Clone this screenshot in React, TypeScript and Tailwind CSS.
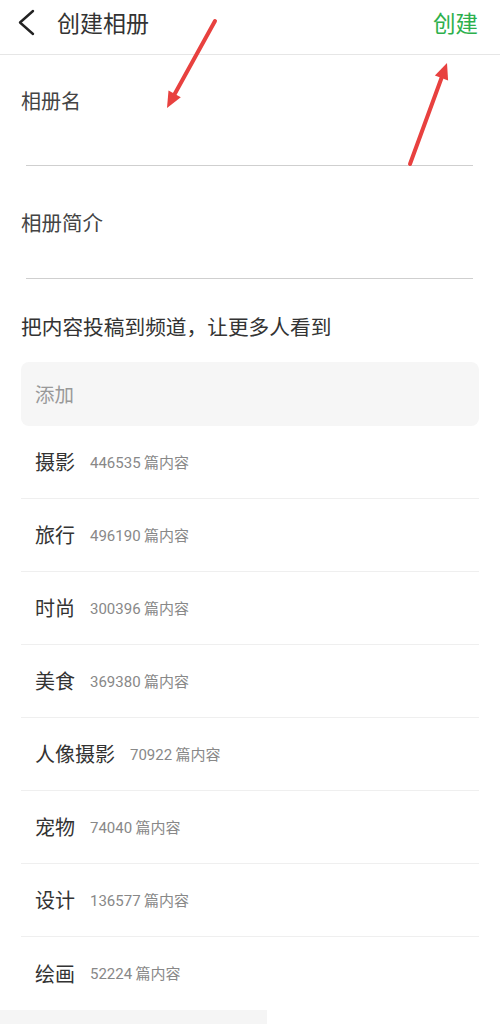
import React from "react";

const items = [
  { name: "摄影", count: "446535" },
  { name: "旅行", count: "496190" },
  { name: "时尚", count: "300396" },
  { name: "美食", count: "369380" },
  { name: "人像摄影", count: "70922" },
  { name: "宠物", count: "74040" },
  { name: "设计", count: "136577" },
  { name: "绘画", count: "52224" },
];

export default function App() {
  return (
    <div
      className="relative w-[500px] h-[1036px] bg-white overflow-hidden"
      style={{ fontFamily: '"Noto Sans CJK SC", "Noto Sans", sans-serif' }}
    >
      {/* header */}
      <div className="h-[55px] border-b border-[#e6e6e6] flex items-center">
        <svg width="40" height="54" viewBox="0 0 40 54" className="ml-[6px] shrink-0">
          <polyline points="33,11 20,22.5 33,34" fill="none" stroke="#222" strokeWidth="2.4" strokeLinecap="round" strokeLinejoin="round" transform="translate(-6,0)" />
        </svg>
        <div className="ml-[11px] text-[23px] leading-[26px] text-[#333] -mt-[10px]">创建相册</div>
        <div className="ml-auto mr-[22px] text-[22.5px] leading-[26px] text-[#2cb04c] -mt-[10px]">创建</div>
      </div>

      <div className="px-[21px]">
        {/* field 1 */}
        <div className="mt-[35px] text-[20px] leading-[22px] text-[#444]">相册名</div>
        <div className="mt-[53px] ml-[5px] mr-[6px] h-px bg-[#cfcfcf]" />

        {/* field 2 */}
        <div className="mt-[45px] text-[20.5px] leading-[22px] text-[#444]">相册简介</div>
        <div className="mt-[45px] ml-[5px] mr-[6px] h-px bg-[#cfcfcf]" />

        {/* section */}
        <div className="mt-[35px] text-[20.7px] leading-[24px] text-[#333]">把内容投稿到频道，让更多人看到</div>

        <div className="mt-[24px] h-[64px] rounded-[8px] bg-[#f6f6f6] flex items-center pl-[14px] text-[19.5px] text-[#999]">
          添加
        </div>

        <div>
          {items.map((it, i) => (
            <div
              key={it.name}
              className={`h-[73px] flex items-center pl-[14px] ${i < items.length - 1 ? "border-b border-[#efefef]" : ""}`}
            >
              <span className="text-[20px] leading-[24px] text-[#333]">{it.name}</span>
              <span className="ml-[15px] text-[15px] leading-[18px] text-[#888]">
                <span style={{ fontFamily: 'Roboto, "Noto Sans", sans-serif' }}>{it.count}</span> 篇内容
              </span>
            </div>
          ))}
        </div>
      </div>

      {/* bottom bar */}
      <div className="absolute left-0 top-[1010px] w-[267px] h-[14px] bg-[#f5f5f5]" />

      {/* annotation arrows */}
      <svg className="absolute inset-0 pointer-events-none" width="500" height="1036" viewBox="0 0 500 1036">
        <line x1="215" y1="21" x2="174.7" y2="94" stroke="#e8413f" strokeWidth="4" strokeLinecap="round" />
        <polygon points="167,108 180.8,97.3 168.5,90.6" fill="#e8413f" />
        <line x1="410" y1="164" x2="441.5" y2="78" stroke="#e8413f" strokeWidth="4" strokeLinecap="round" />
        <polygon points="447,63 448.1,80.4 434.9,75.6" fill="#e8413f" />
      </svg>
    </div>
  );
}
